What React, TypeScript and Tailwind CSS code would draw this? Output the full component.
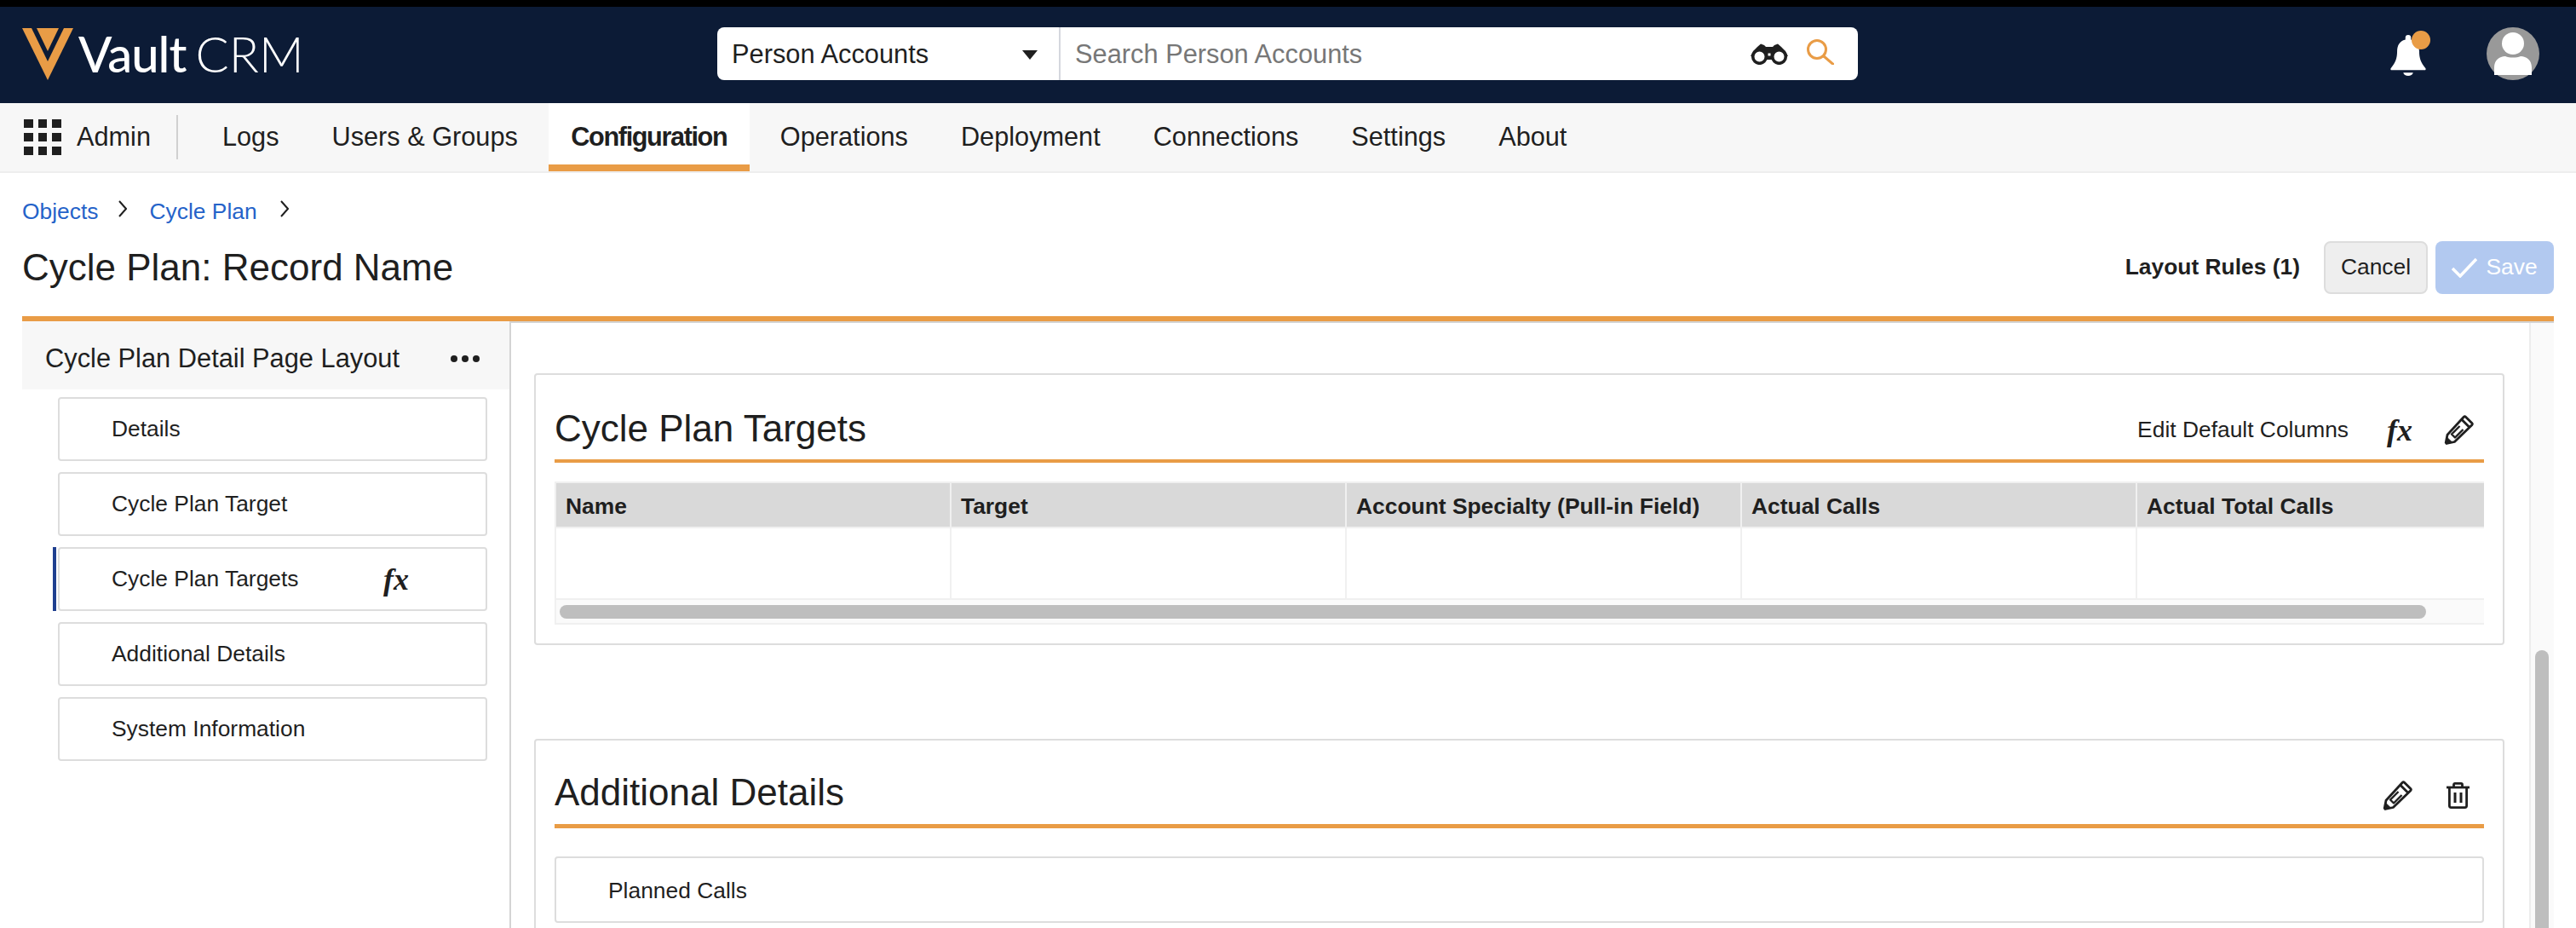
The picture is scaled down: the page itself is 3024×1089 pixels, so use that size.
const TABS_BEFORE = ["Logs", "Users & Groups"];
const TABS_AFTER = ["Operations", "Deployment", "Connections", "Settings", "About"];
const SECTIONS = ["Details", "Cycle Plan Target", "Cycle Plan Targets", "Additional Details", "System Information"];
const COLUMNS = ["Name", "Target", "Account Specialty (Pull-in Field)", "Actual Calls", "Actual Total Calls"];

function Fx({ className = "" }: { className?: string }) {
  return (
    <span className={`font-['Liberation_Serif',serif] italic font-bold text-[36px] leading-none text-[#1f1f1f] ${className}`}>
      fx
    </span>
  );
}

function Pencil({ className = "" }: { className?: string }) {
  return (
    <svg viewBox="0 0 35 35" className={`w-[35px] h-[35px] ${className}`} fill="none" stroke="#1f1f1f" strokeWidth="2.8" strokeLinejoin="round">
      <path d="M25.5 2.2 32.8 9.5a1.6 1.6 0 0 1 0 2.2L12.4 31.5 3 33.5 2.2 32.5 4 23.2 23.3 2.2a1.6 1.6 0 0 1 2.2 0Z" />
      <path d="M21 5.5 29.5 14" />
      <path d="M18.5 13 9 22.5 13 26.5 22.5 17" strokeWidth="2.4" />
      <path d="M3 33.5 3.8 26.5 9.8 32.2Z" fill="#1f1f1f" strokeWidth="1" />
    </svg>
  );
}

function Trash() {
  return (
    <svg viewBox="0 0 27 31" className="w-[27px] h-[31px]" fill="none" stroke="#1f1f1f" strokeWidth="2.8" strokeLinejoin="round">
      <path d="M0 6h27" />
      <path d="M8.5 6V2.8a1.4 1.4 0 0 1 1.4-1.4h7.2a1.4 1.4 0 0 1 1.4 1.4V6" />
      <path d="M3.4 6v21.6a2 2 0 0 0 2 2h16.2a2 2 0 0 0 2-2V6" />
      <path d="M10 12v12M17 12v12" strokeWidth="3" />
    </svg>
  );
}

function Binoculars() {
  return (
    <svg viewBox="0 0 44 26" className="w-[44px] h-[26px]">
      <path d="M8 5 12 1.5 16 3 18 5H26L28 3 32 1.5 36 5 41 10 44 16H0L3 10Z" fill="#1f1f1f" />
      <circle cx="10.5" cy="16.5" r="7.8" fill="#fff" stroke="#1f1f1f" strokeWidth="3.6" />
      <circle cx="33.5" cy="16.5" r="7.8" fill="#fff" stroke="#1f1f1f" strokeWidth="3.6" />
      <rect x="18" y="10" width="8" height="10" fill="#1f1f1f" />
      <rect x="20.5" y="12.5" width="3" height="3" fill="#fff" />
    </svg>
  );
}

function Bell() {
  return (
    <svg viewBox="0 0 44 50" className="w-[44px] h-[48px]">
      <path d="M22 0a3.4 3.4 0 0 1 3.4 3.4v2.2C33 7.2 35.5 13.5 35.5 20c0 8 2 14 7.6 20.5.9 1.1.4 2.5-1 2.5H1.9c-1.4 0-1.9-1.4-1-2.5C6.500 34 8.500 28 8.500 20c0-6.500 2.500-12.800 10.100-14.400V3.400A3.400 3.400 0 0 1 22 0Z" fill="#fff" />
      <path d="M16 46h12c-.6 2.600-3 4-6 4s-5.400-1.400-6-4Z" fill="#fff" />
    </svg>
  );
}

function Avatar() {
  return (
    <svg viewBox="0 0 62 62" className="w-[62px] h-[62px]">
      <circle cx="31" cy="31" r="31" fill="#999" />
      <circle cx="31" cy="19" r="13" fill="#fff" />
      <path d="M9 56V47C9 39 15 34 22 34 27 36 35 36 40 34 47 34 53 39 53 47V56Z" fill="#fff" />
    </svg>
  );
}

function CardHeading({ title, children, last }: { title: string; children: React.ReactNode; last?: boolean }) {
  return (
    <div className={`flex items-center h-[48px] box-content border-[#e99c46] ${last ? "pt-[35px] pb-[15px] border-b-[5px]" : "pt-[37px] pb-[14px] border-b-[4px]"}`}>
      <h2 className="pt-[4px] text-[44px] leading-[48px] text-[#1f1f1f]">{title}</h2>
      <div className={`ml-auto flex items-center ${last ? "pt-[10px]" : "pt-[8px]"}`}>{children}</div>
    </div>
  );
}

export default function App() {
  return (
    <div className="flex flex-col h-[1089px] overflow-hidden bg-white text-[#1f1f1f] font-['Liberation_Sans',Arial,sans-serif]">
      <div className="h-[8px] bg-black" />

      {/* Header */}
      <header className="h-[113px] bg-[#0c1b36] flex items-center pl-[26px]">
        <svg viewBox="0 0 60 61" className="w-[60px] h-[61px] -mt-[3px]">
          <path d="M0 0H60L30 61Z" fill="#e99c46" />
          <path d="M11 0H49L30 39Z" fill="#0c1b36" />
          <path d="M17 0H43L30 27Z" fill="#e99c46" />
        </svg>
        <div className="ml-[6px] -mt-[3px] font-['Lato',sans-serif] text-[58px] leading-none text-white flex items-baseline w-[750px]">
          <span className="font-medium tracking-[-1px]">Vault</span>
          <span className="font-light ml-[11px]">CRM</span>
        </div>
        <div className="flex items-center w-[1339px] h-[62px] bg-white rounded-[8px] -mt-[3px]">
          <div className="flex items-center w-[403px] h-full pl-[17px] pt-[2px] border-r-2 border-[#d5d7de] text-[30.8px] leading-none">
            Person Accounts
            <span className="ml-auto mr-[25px] w-0 h-0 border-x-[9px] border-x-transparent border-t-[11px] border-t-[#1f1f1f]" />
          </div>
          <span className="ml-[17px] pt-[2px] text-[30.8px] leading-none text-[#777]">Search Person Accounts</span>
          <div className="ml-auto flex items-center mr-[28px]">
            <Binoculars />
            <svg viewBox="0 0 32 30" className="ml-[22px] w-[32px] h-[30px] -mt-[4px]" fill="none" stroke="#e99c46" strokeWidth="3">
              <circle cx="12" cy="12" r="10.500" />
              <path d="M20 20 31 29.500" strokeLinecap="round" />
            </svg>
          </div>
        </div>
        <div className="ml-[624px] relative w-[44px] h-[48px]">
          <Bell />
          <span className="absolute -top-[5px] left-[26px] w-[22px] h-[22px] rounded-full bg-[#e99c46]" />
        </div>
        <div className="ml-[70px] -mt-[3px]">
          <Avatar />
        </div>
      </header>

      {/* Nav */}
      <nav className="h-[82px] bg-[#f7f7f7] border-b-2 border-[#eeeeee] flex items-stretch pl-[28px] text-[30.7px]">
        <div className="flex items-center">
          <div className="grid grid-cols-3 gap-[6px] w-[44px]">
            {Array.from({ length: 9 }).map((_, i) => (
              <span key={i} className="h-[10px] bg-[#1f1f1f]" />
            ))}
          </div>
          <span className="ml-[18px] leading-none">Admin</span>
          <span className="ml-[30px] w-[2px] h-[52px] bg-[#d0d0d0]" />
        </div>
        <div className="ml-[21px] flex items-stretch">
          {TABS_BEFORE.map((tab) => (
            <a key={tab} className="flex items-center px-[31px]">{tab}</a>
          ))}
          <a className="flex items-center justify-center mx-[5px] w-[236px] bg-white font-bold tracking-[-1.4px] border-b-[8px] border-[#e99c46] pt-[8px]">
            Configuration
          </a>
          {TABS_AFTER.map((tab) => (
            <a key={tab} className="flex items-center px-[31px]">{tab}</a>
          ))}
        </div>
      </nav>

      {/* Page title */}
      <div className="mx-[26px] pt-[32px] border-b-[6px] border-[#e99c46] h-[174px]">
        <div className="flex items-center h-[26px] text-[26.4px] leading-none text-[#2563c9]">
          <a>Objects</a>
          <svg viewBox="0 0 10 20" className="ml-[24px] w-[10px] h-[20px] -mt-[6px]" fill="none" stroke="#1f1f1f" strokeWidth="2"><path d="M1 1 9 10 1 19" /></svg>
          <a className="ml-[26px]">Cycle Plan</a>
          <svg viewBox="0 0 10 20" className="ml-[27px] w-[10px] h-[20px] -mt-[6px]" fill="none" stroke="#1f1f1f" strokeWidth="2"><path d="M1 1 9 10 1 19" /></svg>
        </div>
        <div className="flex items-center mt-[22px]">
          <h1 className="text-[44px] leading-[50px]">Cycle Plan: Record Name</h1>
          <span className="ml-auto text-[26.4px] font-bold">Layout Rules (1)</span>
          <button className="ml-[28px] w-[122px] h-[62px] bg-[#eeeeee] border-2 border-[#dddddd] rounded-[8px] text-[26.4px]">Cancel</button>
          <button className="ml-[9px] w-[139px] h-[62px] bg-[#b2c9f0] rounded-[8px] text-[26.4px] text-white flex items-center justify-center gap-[10px]">
            <svg viewBox="0 0 30 24" className="w-[30px] h-[24px]" fill="none" stroke="#fff" strokeWidth="3.500"><path d="M1 13 10 22 29 2" /></svg>
            Save
          </button>
        </div>
      </div>

      {/* Body */}
      <div className="flex flex-1 min-h-0 ml-[26px] mr-[26px]">
        <aside className="w-[574px] border-r-2 border-[#d4d4d4]">
          <div className="h-[80px] bg-[#f7f7f7] flex items-center pl-[27px] pt-[8px] text-[30.8px]">
            Cycle Plan Detail Page Layout
            <span className="ml-[60px] flex gap-[5px]">
              {[0, 1, 2].map((d) => (
                <span key={d} className="w-[8px] h-[8px] rounded-full bg-[#1f1f1f]" />
              ))}
            </span>
          </div>
          <div className="pt-[9px] pl-[42px] flex flex-col gap-[13px]">
            {SECTIONS.map((section) => (
              <div key={section} className="relative w-[504px] h-[75px] border-2 border-[#dddddd] rounded-[4px] flex items-center pl-[61px] pt-[1px] text-[26.4px]">
                {section}
                {section === "Cycle Plan Targets" && (
                  <>
                    <span className="absolute -left-[8px] -top-[2px] w-[4px] h-[75px] bg-[#1f3f8f]" />
                    <Fx className="absolute left-[380px]" />
                  </>
                )}
              </div>
            ))}
          </div>
        </aside>

        <main className="flex-1 min-w-0 flex border-t-2 border-[#d4d4d4]">
          <div className="flex-1 min-w-0 pl-[27px] pr-[29px] pt-[59px]">
            <section className="border-2 border-[#dddddd] rounded-[4px] px-[22px] pb-[22px]">
              <CardHeading title="Cycle Plan Targets">
                <span className="text-[26.4px]">Edit Default Columns</span>
                <Fx className="ml-[45px]" />
                <Pencil className="ml-[37px] mr-[12px]" />
              </CardHeading>
              <div className="mt-[22px] border-y-2 border-[#f0f0f0] border-l-2">
                <div className="flex h-[51px] bg-[#d9d9d9] font-bold text-[26.4px]">
                  {COLUMNS.map((column, i) => (
                    <div key={column} className={`flex items-center pl-[11px] pt-[5px] ${i < 4 ? "w-[464px] border-r-2 border-[#f0f0f0]" : "flex-1"}`}>
                      {column}
                    </div>
                  ))}
                </div>
                <div className="flex h-[86px] border-y-2 border-[#f0f0f0]">
                  {COLUMNS.map((column, i) => (
                    <div key={column} className={i < 4 ? "w-[464px] border-r-2 border-[#f0f0f0]" : "flex-1"} />
                  ))}
                </div>
                <div className="h-[27px] bg-[#fafafa] flex items-center pl-[4px]">
                  <span className="w-[2191px] h-[16px] rounded-full bg-[#bebebe]" />
                </div>
              </div>
            </section>

            <section className="mt-[110px] border-2 border-[#dddddd] rounded-[4px] px-[22px] pb-[22px]">
              <CardHeading title="Additional Details" last>
                <Pencil />
                <div className="ml-[40px] mr-[17px]">
                  <Trash />
                </div>
              </CardHeading>
              <div className="mt-[33px] h-[78px] border-2 border-[#dddddd] rounded-[4px] flex items-center pl-[61px] pt-[4px] text-[26.4px]">
                Planned Calls
              </div>
            </section>
          </div>

          {/* Scroll track */}
          <div className="w-[29px] bg-[#fafafa] border-l-2 border-[#ededed] pl-[5px] pt-[384px]">
            <div className="w-[16px] h-[400px] rounded-full bg-[#bebebe]" />
          </div>
        </main>
      </div>
    </div>
  );
}
